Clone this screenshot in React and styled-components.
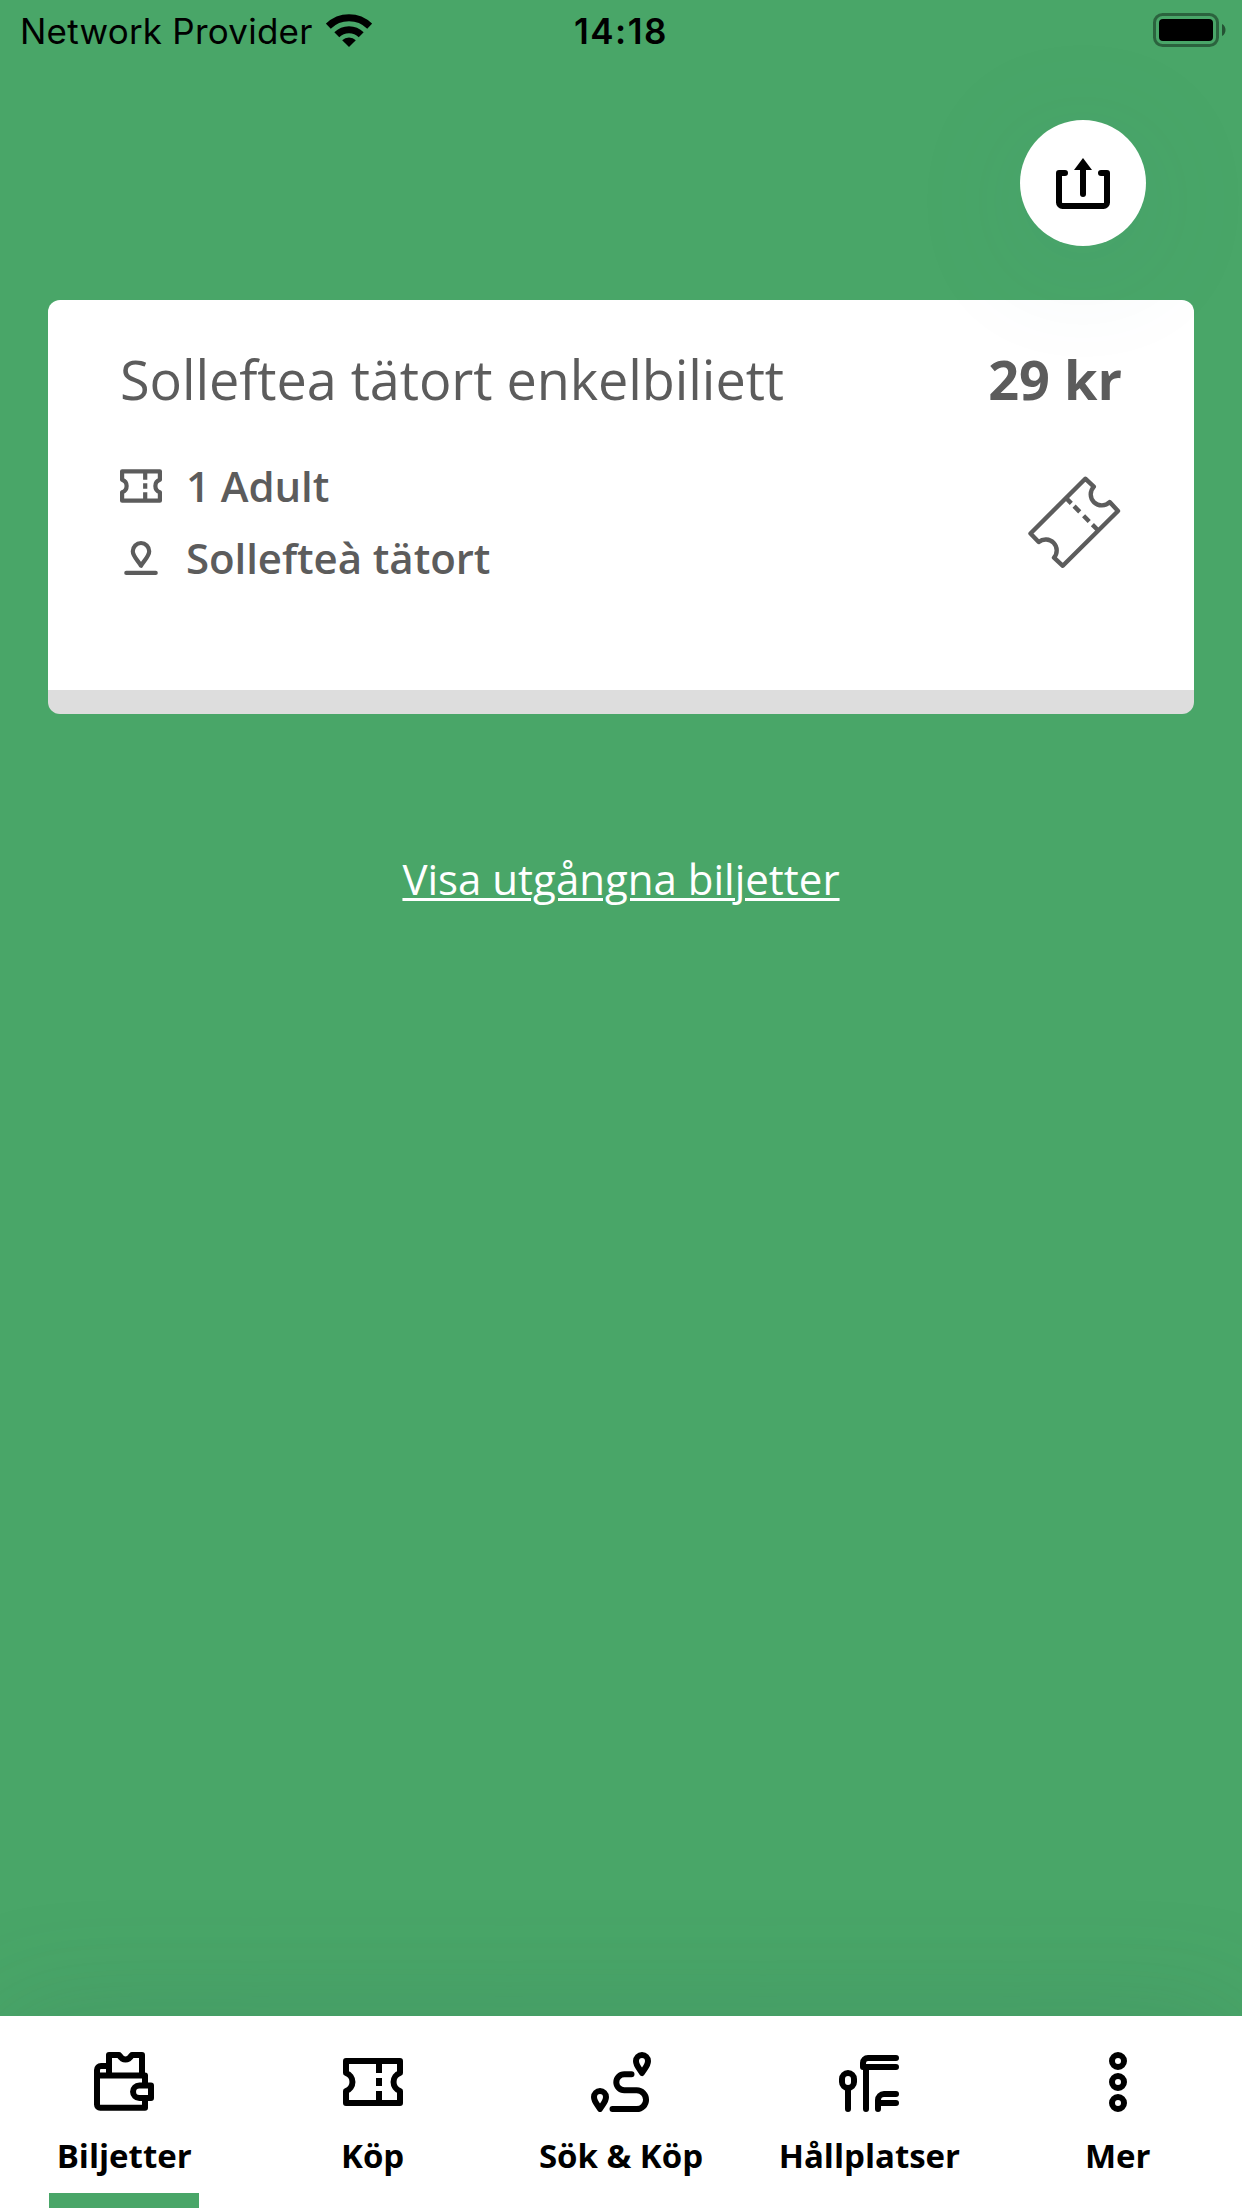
import styled, { createGlobalStyle } from 'styled-components';

const GlobalStyle = createGlobalStyle`
  * {
    box-sizing: border-box;
  }
  body {
    margin: 0;
    background-color: #49a668;
  }
`

const Screen = styled.div`
    display: flex;
    flex-direction: column;
    width: 100%;
    height: 100vh;
    overflow: hidden;
    background-color: #49a668;
    font-family: 'Open Sans', 'Noto Sans', sans-serif;
`

const StatusBar = styled.div`
    display: grid;
    grid-template-columns: 1fr auto 1fr;
    align-items: center;
    height: 60px;
    padding: 0 16px 0 20px;
    font-family: Inter, 'Liberation Sans', sans-serif;
    font-size: 35px;
    line-height: 58px;
    color: black;
`

const Carrier = styled.div`
    display: flex;
    align-items: center;
    gap: 13px;
    letter-spacing: 0.23px;
`

const CarrierName = styled.span`
    padding-top: 2px;
`

const Clock = styled.div`
    padding-top: 2px;
    font-weight: 600;
    letter-spacing: 1.5px;
    margin-right: 4px;
`

const BatterySlot = styled.div`
    display: flex;
    justify-content: flex-end;
`

const Toolbar = styled.div`
    display: flex;
    justify-content: flex-end;
    padding: 60px 96px 54px;
`

const ShareButton = styled.button`
    display: flex;
    justify-content: center;
    align-items: center;
    width: 126px;
    height: 126px;
    padding: 0;
    border: none;
    border-radius: 50%;
    background-color: white;
    color: black;
    z-index: 1;
    box-shadow: 0 18px 120px rgba(66, 124, 140, 0.14);
`

const TicketCard = styled.div`
    height: 414px;
    margin: 0 48px;
    padding: 42px 72px 0;
    border-radius: 12px;
    background: linear-gradient(white 390px, #ddd 390px);
    color: #5c5c5c;
`

const CardHeader = styled.div`
    display: flex;
    justify-content: space-between;
    font-size: 54px;
    line-height: 74px;
    letter-spacing: -0.08px;
    white-space: nowrap;
`

const Price = styled.span`
    font-weight: bold;
    letter-spacing: 0;
`

const CardBody = styled.div`
    display: flex;
    justify-content: space-between;
    align-items: center;
    margin-top: 34px;
`

const InfoRow = styled.div`
    display: flex;
    align-items: center;
    gap: 24px;
    height: 72px;
    font-size: 42px;
    font-weight: 600;
    line-height: 72px;
    letter-spacing: -0.08px;
`

const ExpiredLink = styled.a`
    align-self: center;
    margin-top: 136px;
    font-size: 42px;
    line-height: 57px;
    color: white;
    text-decoration: underline;
    text-decoration-thickness: 3px;
    text-underline-offset: 3px;
`

const TabBar = styled.nav`
    display: grid;
    grid-template-columns: repeat(5, 1fr);
    height: 192px;
    margin-top: auto;
    background-color: white;
    box-shadow: 0 0 120px rgba(50, 90, 90, 0.18);
`

const Tab = styled.div`
    display: flex;
    flex-direction: column;
    align-items: center;
    padding-top: 36px;
    color: black;
`

const TabLabel = styled.span`
    margin-top: 21px;
    font-size: 33px;
    font-weight: bold;
    line-height: 45px;
    white-space: nowrap;
`

const ActiveBar = styled.div`
    width: 150px;
    height: 15px;
    margin-top: auto;
    background-color: #49a668;
`

const Icon = styled.svg`
    display: block;
    flex: none;
    width: ${({ $size }) => $size || 60}px;
    height: ${({ $size }) => $size || 60}px;
    fill: none;
    stroke: currentColor;
    stroke-width: 6;
    stroke-linejoin: round;
`

const WifiIcon = () => (
  <svg width="46" height="33" viewBox="0 0 46 33" fill="none" stroke="black" strokeWidth="7">
    <path d="M2.3 12.2A29.5 29.5 0 0 1 43.7 12.2" />
    <path d="M10.8 20.8A17.3 17.3 0 0 1 35.2 20.8" />
    <path d="M16.2 26.3A9.6 9.6 0 0 1 29.8 26.3L23 33Z" fill="black" stroke="none" />
  </svg>
);

const BatteryIcon = () => (
  <svg width="73" height="34" viewBox="0 0 73 34">
    <rect x="1.5" y="1.5" width="63" height="31" rx="8" fill="none" stroke="black" strokeOpacity="0.4" strokeWidth="3" />
    <rect x="6" y="6" width="54" height="22" rx="4" />
    <path d="M69 11C73.7 13 73.7 21 69 23Z" opacity="0.5" />
  </svg>
);

const ShareIcon = () => (
  <svg width="54" height="51" viewBox="0 0 54 51" fill="none" stroke="currentColor" strokeWidth="6" strokeLinecap="round" strokeLinejoin="round">
    <path d="M9 15H3V44.5A3.5 3.5 0 0 0 6.5 48H47.5A3.5 3.5 0 0 0 51 44.5V15H45" />
    <path d="M27 10V36" />
    <path d="M27 0L36 12H18Z" fill="currentColor" stroke="none" />
  </svg>
);

const TicketIcon = ({ size }) => (
  <Icon viewBox="0 0 60 60" $size={size}>
    <path d="M3 9H57V21A9.5 9.5 0 0 0 57 39V51H3V39A9.5 9.5 0 0 0 3 21Z" />
    <path d="M36 9V21M36 26V34M36 39V51" />
  </Icon>
);

const PinIcon = ({ size }) => (
  <Icon viewBox="0 0 60 60" $size={size} strokeLinecap="round">
    <path d="M30 41C27 35 18.3 28 18.3 20.3A11.7 11.7 0 0 1 41.7 20.3C41.7 28 33 35 30 41Z" />
    <path d="M9 51.3H51" />
  </Icon>
);

const TiltedTicket = () => (
  <svg width="96" height="96" viewBox="-2 -2 96 96" fill="none" stroke="currentColor" strokeWidth="4.4" strokeLinejoin="round">
    <path d="M57.3 2.7L65.8 10.7A11 11 0 1 0 81.7 26L90 35L34.8 89.8L26 81.7A11 11 0 0 0 10.7 66L2.5 57.5Z" />
    <path d="M38 22L70 54.3" strokeDasharray="7.5 4 8 5.5 8 4.5 8" />
  </svg>
);

const WalletIcon = () => (
  <Icon viewBox="0 0 60 60" strokeLinecap="butt">
    <path d="M15 24V3H25C27 6 28.5 7.5 31.5 7.5S36 6 38 3H48V24" />
    <path d="M15 14H7A4 4 0 0 0 3 18V52.5A3.2 3.2 0 0 0 6.2 55.7H51V46M3 23.5H51V34" />
    <path d="M57 33.5H45.3A6.2 6.2 0 0 0 45.3 46H57Z" />
  </Icon>
);

const RouteIcon = () => (
  <Icon viewBox="0 0 60 60" strokeLinecap="round">
    <path d="M51 21C49 17 45 14 45 9A6 6 0 0 1 57 9C57 14 53 17 51 21Z" />
    <path d="M9 57C7 53 3 50 3 45A6 6 0 0 1 15 45C15 50 11 53 9 57Z" />
    <path d="M40.5 22.3H33.3A8 8 0 0 0 33.3 38.3H45.7A9.3 9.3 0 0 1 45.7 57H21.5" />
  </Icon>
);

const StopIcon = () => (
  <Icon viewBox="0 0 60 60" strokeLinecap="round">
    <rect x="3" y="21" width="12" height="15" rx="6" />
    <path d="M9 37V57M27 16V57" />
    <path d="M57 6H29A5 5 0 0 0 24 11V15H57" />
    <path d="M57 42H45A6 6 0 0 0 39 48V57M40 51H57" />
  </Icon>
);

const MoreIcon = () => (
  <Icon viewBox="0 0 60 60">
    <circle cx="30" cy="9" r="6" />
    <circle cx="30" cy="30" r="6" />
    <circle cx="30" cy="51" r="6" />
  </Icon>
);

const tabs = [
  { label: 'Biljetter', icon: WalletIcon, active: true },
  { label: 'Köp', icon: TicketIcon },
  { label: 'Sök & Köp', icon: RouteIcon },
  { label: 'Hållplatser', icon: StopIcon },
  { label: 'Mer', icon: MoreIcon },
];

const App = () => {
  return (
    <>
      <GlobalStyle />
      <Screen>
        <StatusBar>
          <Carrier>
            <CarrierName>Network Provider</CarrierName>
            <WifiIcon />
          </Carrier>
          <Clock>14:18</Clock>
          <BatterySlot>
            <BatteryIcon />
          </BatterySlot>
        </StatusBar>

        <Toolbar>
          <ShareButton aria-label="Dela">
            <ShareIcon />
          </ShareButton>
        </Toolbar>

        <TicketCard>
          <CardHeader>
            <span>Solleftea tätort enkelbiliett</span>
            <Price>29 kr</Price>
          </CardHeader>
          <CardBody>
            <div>
              <InfoRow>
                <TicketIcon size={42} />
                1 Adult
              </InfoRow>
              <InfoRow>
                <PinIcon size={42} />
                Sollefteà tätort
              </InfoRow>
            </div>
            <TiltedTicket />
          </CardBody>
        </TicketCard>

        <ExpiredLink>Visa utgångna biljetter</ExpiredLink>

        <TabBar>
          {tabs.map(({ label, icon: TabIcon, active }) => (
            <Tab key={label}>
              <TabIcon />
              <TabLabel>{label}</TabLabel>
              {active && <ActiveBar />}
            </Tab>
          ))}
        </TabBar>
      </Screen>
    </>
  );
};

export default App;
